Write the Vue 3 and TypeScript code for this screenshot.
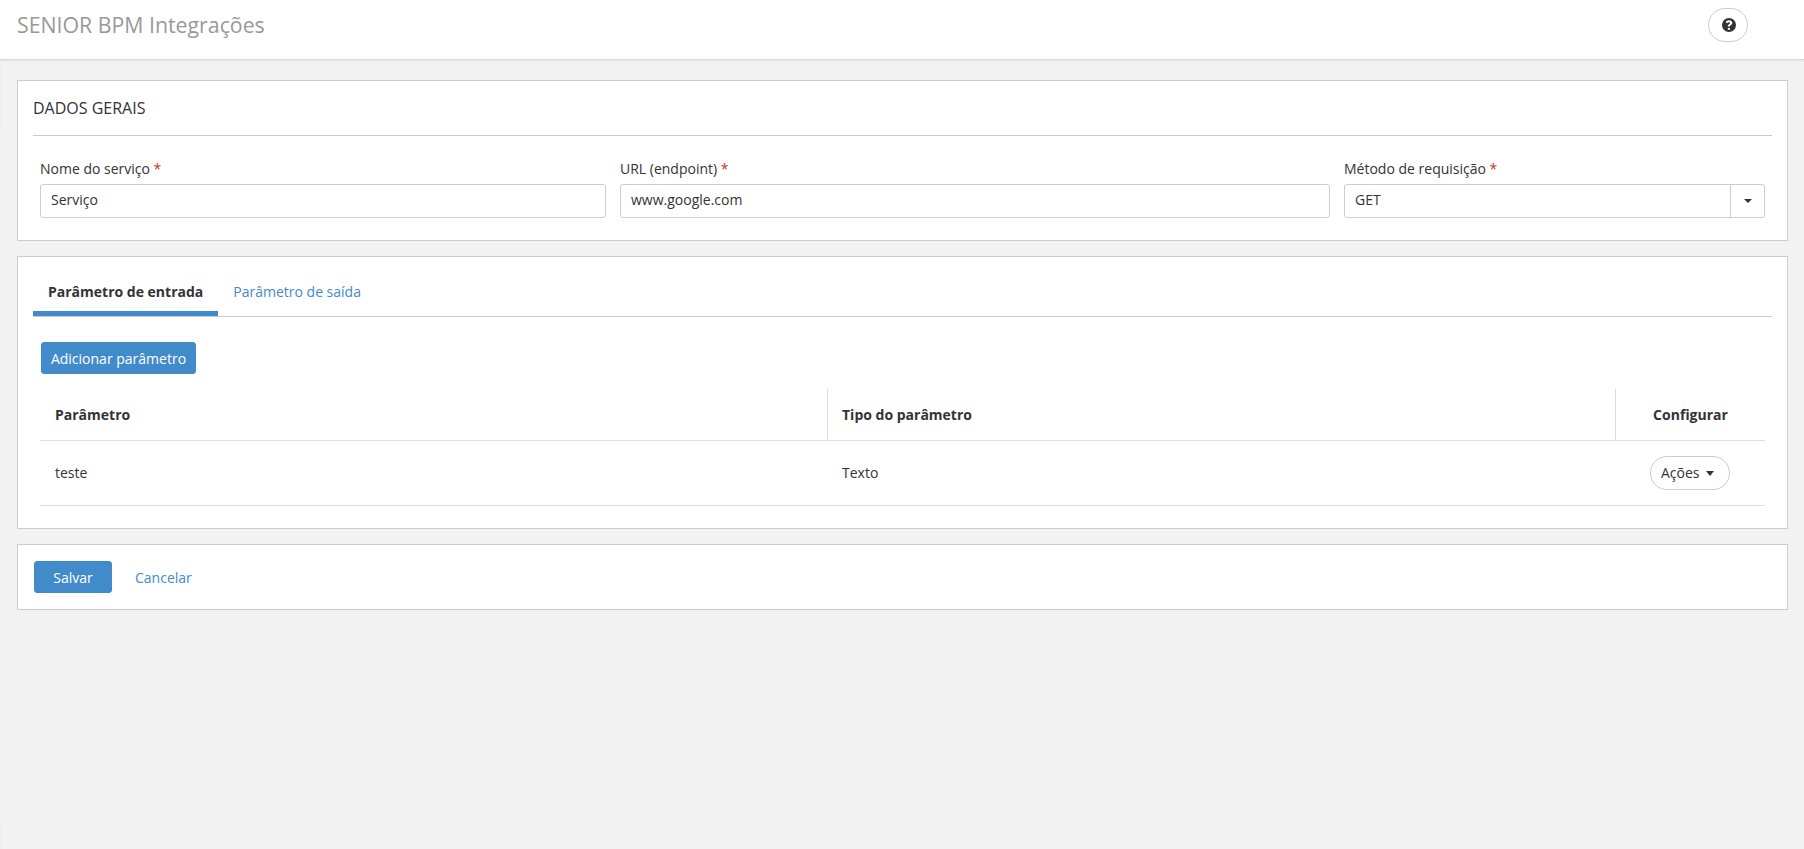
<script setup lang="ts">
interface Field { label: string; value: string }
const fields: Field[] = [
  { label: 'Nome do serviço', value: 'Serviço' },
  { label: 'URL (endpoint)', value: 'www.google.com' },
]
</script>

<template>
  <div class="page">
    <span class="edge edge-top"></span>
    <span class="edge edge-bottom"></span>
    <header class="topbar">
      <span class="brand">SENIOR BPM Integrações</span>
      <button class="help" type="button" aria-label="Ajuda">
        <svg width="14" height="14" viewBox="0.5 0.5 13 13">
          <path fill="#333" fill-rule="evenodd" d="M7 .5a6.500 6.500 0 1 1 0 13 6.500 6.500 0 0 1 0-13ZM5.900 9.700v1.700h2V9.700h-2ZM7.100 2.700c-1.500 0-2.500.7-3.100 1.700l1.300 1c.4-.5.8-.9 1.500-.9.6 0 1.100.3 1.100.8 0 .4-.3.7-.8 1-.7.4-1.200.9-1.200 1.800v.2h2V8.100c0-.3.2-.5.7-.8.8-.5 1.500-1.100 1.500-2.100 0-1.600-1.500-2.500-3-2.500Z"/>
        </svg>
      </button>
    </header>

    <main class="content">
      <section class="card general">
        <h2 class="title">DADOS GERAIS</h2>
        <div class="fields">
          <div v-for="f in fields" :key="f.label" class="field">
            <label>{{ f.label }} <span class="req">*</span></label>
            <div class="input">{{ f.value }}</div>
          </div>
          <div class="field">
            <label>Método de requisição <span class="req">*</span></label>
            <div class="select">
              <span class="select-value">GET</span>
              <span class="select-btn"><i class="caret"></i></span>
            </div>
          </div>
        </div>
      </section>

      <section class="card params">
        <nav class="tabs">
          <a class="tab active">Parâmetro de entrada</a>
          <a class="tab">Parâmetro de saída</a>
        </nav>
        <div class="tab-body">
          <button class="btn add" type="button">Adicionar parâmetro</button>
          <div class="table">
            <div class="row head">
              <div class="cell c1">Parâmetro</div>
              <div class="cell c2">Tipo do parâmetro</div>
              <div class="cell c3">Configurar</div>
            </div>
            <div class="row body">
              <div class="cell c1">teste</div>
              <div class="cell c2">Texto</div>
              <div class="cell c3">
                <button class="actions" type="button">Ações<i class="caret"></i></button>
              </div>
            </div>
          </div>
        </div>
      </section>

      <section class="card footer">
        <button class="btn save" type="button">Salvar</button>
        <a class="cancel">Cancelar</a>
      </section>
    </main>
  </div>
</template>

<style>
html, body { margin: 0; background: #f2f2f2; }
</style>

<style scoped>
.page {
  position: relative;
  min-height: 849px;
  background: #f2f2f2;
  font-family: "Open Sans", "Noto Sans", sans-serif;
  font-size: 14px;
  line-height: 20px;
  color: #333;
}
.edge {
  position: absolute;
  left: 0;
  width: 2px;
  background: rgba(0, 0, 0, 0.015);
}
.edge-top { top: 65px; height: 62px; }
.edge-bottom { top: 826px; height: 23px; }
.topbar {
  box-sizing: border-box;
  height: 60px;
  padding: 0 56px 0 17px;
  display: flex;
  align-items: flex-start;
  justify-content: space-between;
  background: #fff;
  border-bottom: 1px solid #d9d9d9;
  box-shadow: 0 1px 2px rgba(0, 0, 0, 0.08);
}
.brand { margin-top: 10px; font-size: 21.3px; line-height: 30px; color: #999; }
.help {
  box-sizing: border-box;
  width: 40px;
  height: 34px;
  margin-top: 8px;
  padding: 0 0 0 1px;
  display: flex;
  align-items: center;
  justify-content: center;
  background: #fff;
  border: 1px solid #ccc;
  border-radius: 17px;
}
.content {
  padding: 20px 16px 0 17px;
  display: flex;
  flex-direction: column;
  gap: 15px;
}
.card {
  box-sizing: border-box;
  background: #fff;
  border: 1px solid #ccc;
}
.general { height: 161px; padding: 0 15px; }
.title {
  margin: 0;
  height: 55px;
  box-sizing: border-box;
  padding-top: 16px;
  font-size: 16px;
  line-height: 22px;
  font-weight: 400;
  color: #333;
  border-bottom: 1px solid #ccc;
}
.fields {
  margin: 21px 7px 0 7px;
  display: grid;
  grid-template-columns: 566px 710px 421px;
  column-gap: 14px;
}
.field label { display: block; height: 27px; padding-top: 2px; box-sizing: border-box; line-height: 20px; color: #333; }
.req { color: #c0392b; }
.input, .select {
  box-sizing: border-box;
  height: 34px;
  border: 1px solid #ccc;
  border-radius: 3px;
  background: #fff;
}
.input { padding: 5px 10px; }
.select { display: flex; }
.select-value { flex: 1; padding: 5px 10px; }
.select-btn {
  width: 33px;
  border-left: 1px solid #ccc;
  display: flex;
  align-items: center;
  justify-content: center;
}
.caret {
  display: inline-block;
  width: 0;
  height: 0;
  border-top: 4px solid #333;
  border-left: 4px solid transparent;
  border-right: 4px solid transparent;
}
.params { height: 273px; padding: 0 15px; }
.tabs {
  display: flex;
  height: 60px;
  box-sizing: border-box;
  border-bottom: 1px solid #ccc;
}
.tab {
  box-sizing: border-box;
  height: 59px;
  padding: 25px 15px 0;
  color: #428bca;
  cursor: pointer;
}
.tab.active {
  font-weight: 700;
  color: #333;
  border-bottom: 5px solid #428bca;
}
.tab-body { padding: 25px 7px 0; }
.btn {
  box-sizing: border-box;
  height: 32px;
  border: 1px solid #428bca;
  border-radius: 3px;
  background: #428bca;
  color: #fff;
  font: inherit;
  padding: 1px 0 0;
}
.add { display: block; width: 155px; margin-left: 1px; }
.table { margin-top: 15px; }
.row { display: grid; grid-template-columns: 787px 788px 150px; box-sizing: border-box; border-bottom: 1px solid #ddd; }
.head { height: 52px; font-weight: 700; }
.body { height: 65px; }
.cell { display: flex; align-items: center; padding-left: 15px; box-sizing: border-box; }
.head .cell { padding-top: 1px; }
.head .cell + .cell { border-left: 1px solid #ddd; padding-left: 14px; }
.cell.c3, .head .cell.c3 { justify-content: center; padding-left: 0; }
.actions {
  box-sizing: border-box;
  width: 80px;
  height: 34px;
  padding: 0 0 0 10px;
  display: flex;
  align-items: center;
  justify-content: flex-start;
  background: #fff;
  border: 1px solid #ccc;
  border-radius: 17px;
  font: inherit;
  color: #333;
}
.actions .caret {
  margin-left: 6px;
  border-top-width: 5px;
  border-left-width: 4.5px;
  border-right-width: 4.5px;
}
.footer {
  height: 66px;
  padding: 16px 0 0 16px;
  display: flex;
  align-items: flex-start;
}
.save { width: 78px; }
.cancel { margin-left: 23px; padding-top: 1px; line-height: 32px; color: #428bca; cursor: pointer; }
</style>
